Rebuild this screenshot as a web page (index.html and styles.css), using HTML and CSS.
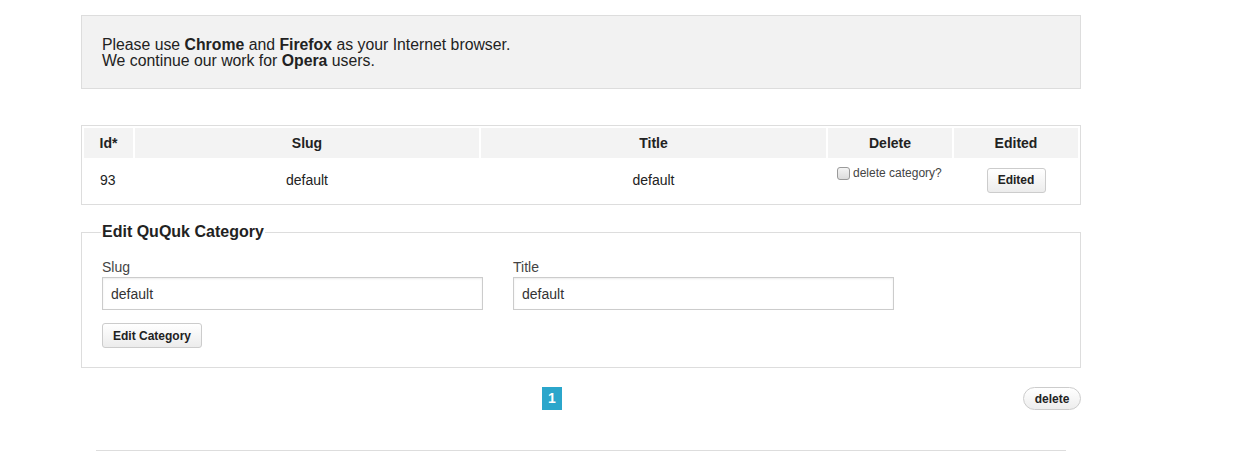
FILE: index.html
```html
<!DOCTYPE html>
<html>
<head>
<meta charset="utf-8">
<link rel="stylesheet" href="styles.css">
</head>
<body>
<div class="page">
  <div class="notice">
    Please use <b>Chrome</b> and <b>Firefox</b> as your Internet browser.<br>
    We continue our work for <b>Opera</b> users.
  </div>

  <table class="grid">
    <colgroup>
      <col class="c-id"><col class="c-slug"><col class="c-title"><col class="c-del"><col class="c-edit">
    </colgroup>
    <thead>
      <tr><th>Id*</th><th>Slug</th><th>Title</th><th>Delete</th><th>Edited</th></tr>
    </thead>
    <tbody>
      <tr>
        <td class="id">93</td>
        <td>default</td>
        <td>default</td>
        <td class="del"><label><input type="checkbox" class="chk"> delete category?</label></td>
        <td><button class="btn">Edited</button></td>
      </tr>
    </tbody>
  </table>

  <fieldset class="edit">
    <legend>Edit QuQuk Category</legend>
    <div class="fields">
      <div class="field">
        <label>Slug</label>
        <input type="text" value="default">
      </div>
      <div class="field">
        <label>Title</label>
        <input type="text" value="default">
      </div>
    </div>
    <button class="btn btn-wide">Edit Category</button>
  </fieldset>

  <div class="pager-row">
    <div class="pager"><span class="page-num">1</span></div>
    <button class="btn-round">delete</button>
  </div>

  <hr class="rule">
</div>
</body>
</html>
```

FILE: styles.css
```css
html, body {
  margin: 0;
  padding: 0;
  background: #fff;
}
body {
  font-family: "Liberation Sans", Arial, sans-serif;
  color: #333;
  font-size: 14px;
}
.page {
  width: 1000px;
  margin-left: 81px;
  padding-top: 15px;
}
.notice {
  background: #f2f2f2;
  border: 1px solid #ddd;
  padding: 21px 20px 19px 20px;
  font-size: 15.8px;
  line-height: 16px;
  color: #222;
}
.notice b { font-weight: bold; }

.grid {
  margin-top: 36px;
  width: 1000px;
  table-layout: fixed;
  border: 1px solid #ddd;
  border-spacing: 2px;
  border-collapse: separate;
}
.c-id { width: 49px; }
.c-slug { width: 344px; }
.c-title { width: 345px; }
.c-del { width: 124px; }
.c-edit { width: 124px; }
.grid th {
  box-sizing: border-box;
  background: #f3f3f3;
  height: 30px;
  padding: 0;
  font-size: 14px;
  font-weight: bold;
  color: #222;
  text-align: center;
}
.grid td {
  box-sizing: border-box;
  height: 42px;
  padding: 0 0 2px 0;
  text-align: center;
  font-size: 14px;
  color: #222;
}
.grid td.id { text-align: left; padding-left: 16px; }
.grid td.del {
  vertical-align: top;
  text-align: left;
  padding: 6px 0 0 9px;
  font-size: 12px;
  color: #444;
}
.del label { display: inline-flex; align-items: center; gap: 3px; }
.chk {
  -webkit-appearance: none;
  appearance: none;
  box-sizing: border-box;
  margin: 0;
  width: 13px;
  height: 13px;
  border: 1px solid #9a9a9a;
  border-radius: 3px;
  background: linear-gradient(#f4f4f4, #dcdcdc);
}
.btn {
  font-family: "Liberation Sans", Arial, sans-serif;
  font-size: 12px;
  font-weight: bold;
  color: #222;
  background: linear-gradient(#fff, #ececec);
  border: 1px solid #ccc;
  border-radius: 3px;
  height: 25px;
  padding: 0 8px;
  cursor: pointer;
}
.grid .btn { width: 59px; padding: 0; }

.edit {
  margin: 18px 0 0 0;
  border: 1px solid #ddd;
  padding: 14px 20px 19px 20px;
}
.edit legend {
  font-size: 16px;
  font-weight: bold;
  color: #222;
  padding: 0 1px;
  margin-left: -1px;
}
.fields {
  display: flex;
  gap: 30px;
  margin-top: 4px;
}
.field {
  display: flex;
  flex-direction: column;
  width: 381px;
}
.field label {
  font-size: 14px;
  color: #444;
  line-height: 16px;
  margin-bottom: 2px;
}
.field input {
  box-sizing: border-box;
  height: 33px;
  width: 381px;
  border: 1px solid #ccc;
  box-shadow: inset 0 1px 2px rgba(0,0,0,0.08);
  padding: 0 8px;
  font-family: "Liberation Sans", Arial, sans-serif;
  font-size: 14px;
  color: #333;
  margin: 0;
}
.btn-wide {
  margin-top: 13px;
  width: 100px;
  padding: 0;
}

.pager-row {
  display: flex;
  align-items: center;
  margin-top: 19px;
}
.pager {
  flex: 1;
  display: flex;
  justify-content: center;
}
.page-num {
  display: inline-block;
  width: 20px;
  height: 23px;
  line-height: 23px;
  text-align: center;
  background: #2ba6cb;
  color: #fff;
  font-weight: bold;
  font-size: 14px;
}
.btn-round {
  font-family: "Liberation Sans", Arial, sans-serif;
  font-size: 12px;
  font-weight: bold;
  color: #222;
  background: linear-gradient(#fff, #ededed);
  border: 1px solid #ccc;
  border-radius: 12px;
  height: 23px;
  width: 58px;
  padding: 0;
}
.rule {
  margin: 40px 15px 0 15px;
  border: 0;
  border-top: 1px solid #ddd;
}
```
